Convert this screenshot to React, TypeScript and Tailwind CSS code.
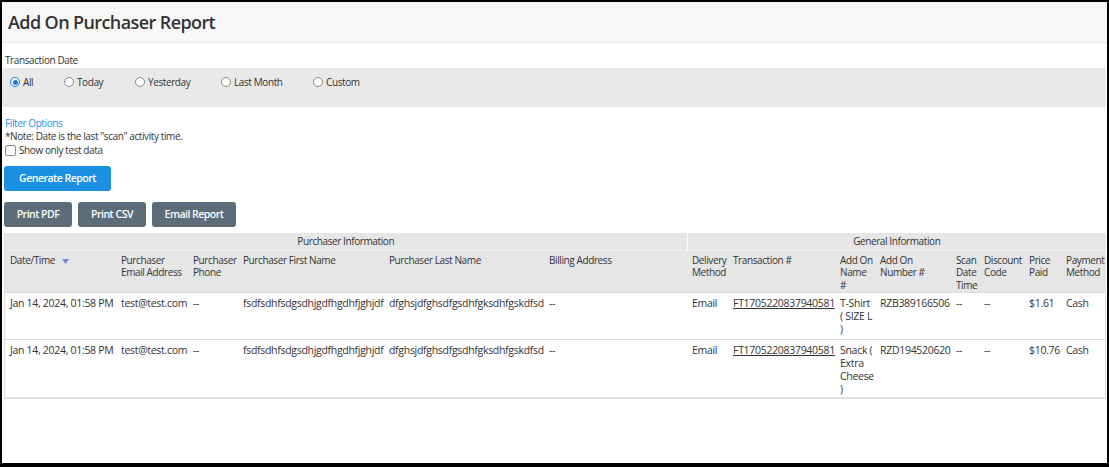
import React from 'react';

interface IRow {
	date: string;
	email: string;
	phone: string;
	first: string;
	last: string;
	billing: string;
	delivery: string;
	txn: string;
	addOnName: string[];
	addOnNumber: string;
	scan: string;
	discount: string;
	price: string;
	payment: string;
}

const rows: IRow[] = [
	{
		date: 'Jan 14, 2024, 01:58 PM',
		email: 'test@test.com',
		phone: '--',
		first: 'fsdfsdhfsdgsdhjgdfhgdhfjghjdf',
		last: 'dfghsjdfghsdfgsdhfgksdhfgskdfsd',
		billing: '--',
		delivery: 'Email',
		txn: 'FT1705220837940581',
		addOnName: ['T-Shirt', '( SIZE L', ')'],
		addOnNumber: 'RZB389166506',
		scan: '--',
		discount: '--',
		price: '$1.61',
		payment: 'Cash',
	},
	{
		date: 'Jan 14, 2024, 01:58 PM',
		email: 'test@test.com',
		phone: '--',
		first: 'fsdfsdhfsdgsdhjgdfhgdhfjghjdf',
		last: 'dfghsjdfghsdfgsdhfgksdhfgskdfsd',
		billing: '--',
		delivery: 'Email',
		txn: 'FT1705220837940581',
		addOnName: ['Snack (', 'Extra', 'Cheese', ')'],
		addOnNumber: 'RZD194520620',
		scan: '--',
		discount: '--',
		price: '$10.76',
		payment: 'Cash',
	},
];

const colWidths = [
	'w-[111px]',
	'w-[72px]',
	'w-[50px]',
	'w-[146px]',
	'w-[160px]',
	'w-[143px]',
	'w-[41px]',
	'w-[107px]',
	'w-[40px]',
	'w-[76px]',
	'w-[28px]',
	'w-[45px]',
	'w-[37px]',
	'w-[45px]',
];

const headers: string[][] = [
	['Date/Time'],
	['Purchaser', 'Email Address'],
	['Purchaser', 'Phone'],
	['Purchaser First Name'],
	['Purchaser Last Name'],
	['Billing Address'],
	['Delivery', 'Method'],
	['Transaction #'],
	['Add On', 'Name', '#'],
	['Add On', 'Number #'],
	['Scan', 'Date', 'Time'],
	['Discount', 'Code'],
	['Price', 'Paid'],
	['Payment', 'Method'],
];

const Radio = ({ label, checked }: { label: string; checked?: boolean }) => (
	<label className="flex items-center gap-[3px]">
		<span
			className={`flex h-[10px] w-[10px] items-center justify-center rounded-full border ${
				checked ? 'border-[#1a7fd8] bg-white' : 'border-[#8a8a8a] bg-white'
			}`}
		>
			{checked && <span className="h-[5px] w-[5px] rounded-full bg-[#1a7fd8]" />}
		</span>
		<span>{label}</span>
	</label>
);

const App = () => {
	const cellCls = 'align-top pl-[5px] pr-[1px] pt-[4px] pb-[1px] whitespace-nowrap';
	const btnCls = 'h-[25px] rounded-[3px] text-[10.5px] font-semibold tracking-[-0.5px] text-white';

	return (
		<div className="h-[467px] w-[1109px] overflow-hidden border-t-2 border-l-2 border-r-2 border-b-4 border-black bg-white font-['Open_Sans',sans-serif] text-[11px] leading-[12.5px] text-[#333]">
			<div className="flex h-[41px] items-center border-b border-[#e4e4e4] bg-[#f8f8f8] pl-[6px]">
				<h1 className="text-[18px] font-semibold leading-none tracking-[-0.6px] text-[#333]">
					Add On Purchaser Report
				</h1>
			</div>

			<div className="pl-[3px] pt-[11px] text-[10px] leading-[12px] tracking-[-0.4px]">
				Transaction Date
			</div>
			<div className="mr-px mt-[2px] flex h-[39px] items-start bg-[#e9e9e9] pl-[8px] pt-[8px] text-[10px] tracking-[-0.4px]">
				<div className="w-[54px]">
					<Radio label="All" checked />
				</div>
				<div className="w-[71px]">
					<Radio label="Today" />
				</div>
				<div className="w-[86px]">
					<Radio label="Yesterday" />
				</div>
				<div className="w-[92px]">
					<Radio label="Last Month" />
				</div>
				<div>
					<Radio label="Custom" />
				</div>
			</div>

			<div className="pl-[3px] pt-[10px] text-[10px] leading-[12.5px] tracking-[-0.4px]">
				<div className="text-[#2196f3]">Filter Options</div>
				<div>*Note: Date is the last "scan" activity time.</div>
				<label className="mt-[2px] flex items-center gap-[3px]">
					<span className="h-[11px] w-[11px] rounded-[2px] border border-[#8a8a8a] bg-white" />
					<span>Show only test data</span>
				</label>
			</div>

			<div className="pl-[2px] pt-[9px]">
				<button className={`${btnCls} w-[107px] bg-[#1b8fe2]`}>Generate Report</button>
				<div className="mt-[11px] flex gap-[6px]">
					<button className={`${btnCls} w-[68px] bg-[#5a6d79]`}>Print PDF</button>
					<button className={`${btnCls} w-[68px] bg-[#5a6d79]`}>Print CSV</button>
					<button className={`${btnCls} w-[84px] bg-[#5a6d79]`}>Email Report</button>
				</div>
			</div>

			<div className="mt-[6px] ml-[2px] w-[1102px] border-x border-b-2 border-[#dedede]">
				<table className="w-[1101px] table-fixed border-collapse text-[10.5px] tracking-[-0.3px]">
					<colgroup>
						{colWidths.map((w, i) => (
							<col key={i} className={w} />
						))}
					</colgroup>
					<thead className="text-[10px] tracking-[-0.4px]">
						<tr className="h-[17px] bg-[#e6e6e6]">
							<th colSpan={6} className="border-r border-white text-center font-normal leading-[17px]">
								Purchaser Information
							</th>
							<th colSpan={8} className="text-center font-normal leading-[17px]">
								General Information
							</th>
						</tr>
						<tr className="h-[42px] border-t border-[#f2f2f2] bg-[#e6e6e6]">
							{headers.map((h, i) => (
								<th
									key={i}
									className="pl-[5px] pr-[1px] pt-[3px] text-left align-top font-normal leading-[12.5px] whitespace-nowrap"
								>
									{h.map((line, j) => (
										<div key={j} className="flex items-center">
											{line}
											{i === 0 && (
												<svg width="7" height="5" viewBox="0 0 7 5" className="ml-[7px] mt-[3px]">
													<path d="M0 0 L7 0 L3.5 5 Z" fill="#7683d8" />
												</svg>
											)}
										</div>
									))}
								</th>
							))}
						</tr>
					</thead>
					<tbody className="leading-[13px]">
						{rows.map((r, idx) => (
							<tr key={idx} className="h-[47px] border-t border-[#dcdcdc]">
								<td className={cellCls}>{r.date}</td>
								<td className={cellCls}>{r.email}</td>
								<td className={cellCls}>{r.phone}</td>
								<td className={cellCls}>{r.first}</td>
								<td className={cellCls}>{r.last}</td>
								<td className={cellCls}>{r.billing}</td>
								<td className={cellCls}>{r.delivery}</td>
								<td className={cellCls}>
									<span className="underline">{r.txn}</span>
								</td>
								<td className={cellCls}>
									{r.addOnName.map((l, j) => (
										<div key={j}>{l}</div>
									))}
								</td>
								<td className={cellCls}>{r.addOnNumber}</td>
								<td className={cellCls}>{r.scan}</td>
								<td className={cellCls}>{r.discount}</td>
								<td className={cellCls}>{r.price}</td>
								<td className={cellCls}>{r.payment}</td>
							</tr>
						))}
					</tbody>
				</table>
			</div>
		</div>
	);
};

export default App;
